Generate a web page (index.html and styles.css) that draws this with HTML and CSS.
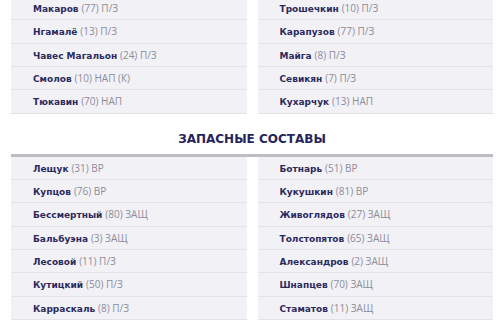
FILE: index.html
```html
<!DOCTYPE html>
<html lang="ru">
<head>
<meta charset="utf-8">
<link rel="stylesheet" href="styles.css">
</head>
<body>
<div class="page">
  <div class="lineup">
    <ul class="col">
      <li class="row"><b>Макаров</b> <span>(77) П/З</span></li>
      <li class="row"><b>Нгамалё</b> <span>(13) П/З</span></li>
      <li class="row"><b>Чавес Магальон</b> <span>(24) П/З</span></li>
      <li class="row"><b>Смолов</b> <span>(10) НАП (К)</span></li>
      <li class="row"><b>Тюкавин</b> <span>(70) НАП</span></li>
    </ul>
    <ul class="col">
      <li class="row"><b>Трошечкин</b> <span>(10) П/З</span></li>
      <li class="row"><b>Карапузов</b> <span>(77) П/З</span></li>
      <li class="row"><b>Майга</b> <span>(8) П/З</span></li>
      <li class="row"><b>Севикян</b> <span>(7) П/З</span></li>
      <li class="row"><b>Кухарчук</b> <span>(13) НАП</span></li>
    </ul>
  </div>
  <h2 class="title">ЗАПАСНЫЕ СОСТАВЫ</h2>
  <div class="lineup subs">
    <ul class="col">
      <li class="row"><b>Лещук</b> <span>(31) ВР</span></li>
      <li class="row"><b>Купцов</b> <span>(76) ВР</span></li>
      <li class="row"><b>Бессмертный</b> <span>(80) ЗАЩ</span></li>
      <li class="row"><b>Бальбуэна</b> <span>(3) ЗАЩ</span></li>
      <li class="row"><b>Лесовой</b> <span>(11) П/З</span></li>
      <li class="row"><b>Кутицкий</b> <span>(50) П/З</span></li>
      <li class="row"><b>Карраскаль</b> <span>(8) П/З</span></li>
    </ul>
    <ul class="col">
      <li class="row"><b>Ботнарь</b> <span>(51) ВР</span></li>
      <li class="row"><b>Кукушкин</b> <span>(81) ВР</span></li>
      <li class="row"><b>Живоглядов</b> <span>(27) ЗАЩ</span></li>
      <li class="row"><b>Толстопятов</b> <span>(65) ЗАЩ</span></li>
      <li class="row"><b>Александров</b> <span>(2) ЗАЩ</span></li>
      <li class="row"><b>Шнапцев</b> <span>(70) ЗАЩ</span></li>
      <li class="row"><b>Стаматов</b> <span>(11) ЗАЩ</span></li>
    </ul>
  </div>
</div>
</body>
</html>
```
FILE: styles.css
```css
* { box-sizing: border-box; }
html, body { margin: 0; padding: 0; background: #fff; }
body { font-family: "DejaVu Sans", "Open Sans", sans-serif; overflow: hidden; }
.page { width: 482px; margin: -3px 0 0 11px; }
.lineup { display: grid; grid-template-columns: 1fr 1fr; column-gap: 11px; }
.subs { border-top: 3px solid #bdbdc4; }
.col { list-style: none; margin: 0; padding: 0; }
.row {
  height: 23.33px;
  line-height: 22.33px;
  background: #f2f2f6;
  border-bottom: 1px solid #e2e2e8;
  padding-left: 22px;
  font-size: 9px;
  white-space: nowrap;
}
.row b { color: #2b2a5c; font-weight: bold; }
.row span { color: #8c8c9a; font-family: "Open Sans", sans-serif; font-size: 10px; }
.title {
  margin: 0;
  height: 40px;
  padding-top: 16px;
  text-align: center;
  font-size: 12px;
  font-weight: bold;
  color: #26245a;
  line-height: 18px;
}
```
